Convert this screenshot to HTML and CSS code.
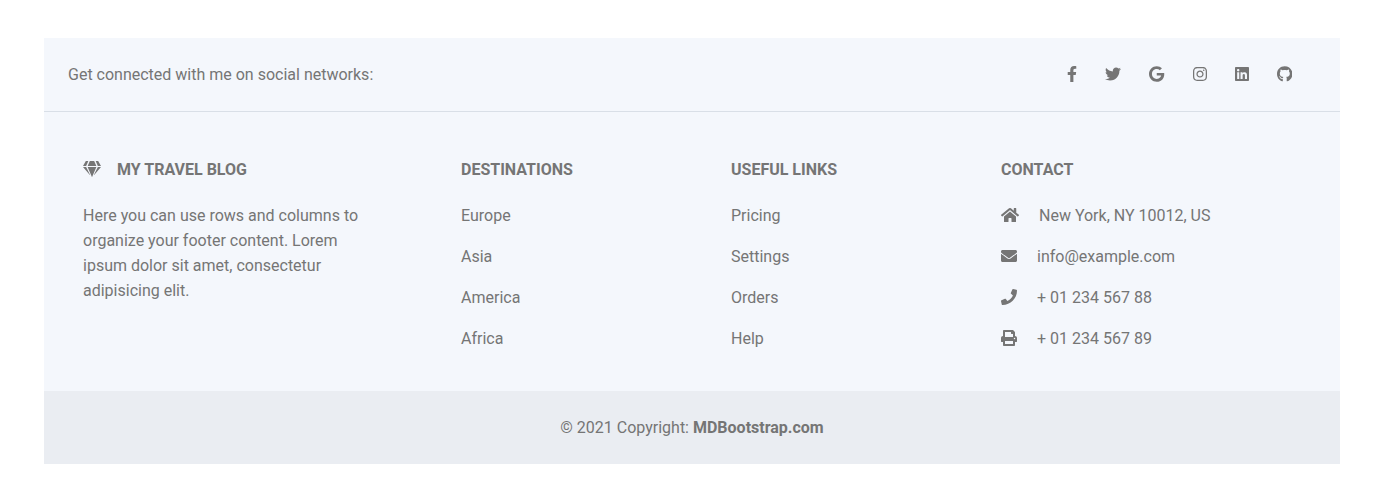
FILE: index.html
```html
<!DOCTYPE html>
<html lang="en">
<head>
<meta charset="utf-8">
<title>My travel blog</title>
<link rel="stylesheet" href="styles.css">
</head>
<body>
<footer class="footer">
  <section class="social">
    <span>Get connected with me on social networks:</span>
    <div class="social-links">
      <a href="#" aria-label="Facebook"><svg class="icon w-facebook" viewBox="0 0 320 512"><path d="M279.14 288l14.22-92.66h-88.91v-60.13c0-25.35 12.42-50.06 52.24-50.06h40.42V6.26S260.43 0 225.36 0c-73.22 0-121.08 44.38-121.08 124.72v70.62H22.89V288h81.39v224h100.17V288z"/></svg></a>
      <a href="#" aria-label="Twitter"><svg class="icon w-square" viewBox="0 0 512 512"><path d="M459.37 151.716c.325 4.548.325 9.097.325 13.645 0 138.72-105.583 298.558-298.558 298.558-59.452 0-114.68-17.219-161.137-47.106 8.447.974 16.568 1.299 25.34 1.299 49.055 0 94.213-16.568 130.274-44.832-46.132-.975-84.792-31.188-98.112-72.772 6.498.974 12.995 1.624 19.818 1.624 9.421 0 18.843-1.3 27.614-3.573-48.081-9.747-84.143-51.98-84.143-102.985v-1.299c13.969 7.797 30.214 12.67 47.431 13.319-28.264-18.843-46.781-51.005-46.781-87.391 0-19.492 5.197-37.36 14.294-52.954 51.655 63.675 129.3 105.258 216.365 109.807-1.624-7.797-2.599-15.918-2.599-24.04 0-57.828 46.782-104.934 104.934-104.934 30.213 0 57.502 12.67 76.67 33.137 23.715-4.548 46.456-13.32 66.599-25.34-7.798 24.366-24.366 44.833-46.132 57.827 21.117-2.273 41.584-8.122 60.426-16.243-14.292 20.791-32.161 39.308-52.628 54.253z"/></svg></a>
      <a href="#" aria-label="Google"><svg class="icon w-google" viewBox="0 0 488 512"><path d="M488 261.8C488 403.3 391.1 504 248 504 110.8 504 0 393.2 0 256S110.8 8 248 8c66.8 0 123 24.5 166.3 64.9l-67.5 64.9C258.5 52.6 94.3 116.6 94.3 256c0 86.5 69.1 156.6 153.7 156.6 98.2 0 135-70.4 140.8-106.9H248v-85.3h236.1c2.3 12.7 3.9 24.9 3.9 41.4z"/></svg></a>
      <a href="#" aria-label="Instagram"><svg class="icon w-narrow" viewBox="0 0 448 512"><path d="M224.1 141c-63.6 0-114.9 51.3-114.9 114.9s51.3 114.9 114.9 114.9S339 319.5 339 255.9 287.7 141 224.1 141zm0 189.6c-41.1 0-74.7-33.5-74.7-74.7s33.5-74.7 74.7-74.7 74.7 33.5 74.7 74.7-33.6 74.7-74.7 74.7zm146.4-194.3c0 14.9-12 26.8-26.8 26.8-14.9 0-26.8-12-26.8-26.8s12-26.8 26.8-26.8 26.8 12 26.8 26.8zm76.1 27.2c-1.7-35.9-9.9-67.7-36.2-93.9-26.2-26.2-58-34.4-93.9-36.2-37-2.1-147.9-2.1-184.9 0-35.8 1.7-67.6 9.9-93.9 36.1s-34.4 58-36.2 93.9c-2.1 37-2.1 147.9 0 184.9 1.7 35.9 9.9 67.7 36.2 93.9s58 34.4 93.9 36.2c37 2.1 147.9 2.1 184.9 0 35.9-1.7 67.7-9.9 93.9-36.2 26.2-26.2 34.4-58 36.2-93.9 2.1-37 2.1-147.8 0-184.8zM398.8 388c-7.8 19.6-22.9 34.7-42.6 42.6-29.5 11.7-99.5 9-132.1 9s-102.7 2.6-132.1-9c-19.6-7.8-34.7-22.9-42.6-42.6-11.7-29.5-9-99.5-9-132.1s-2.6-102.7 9-132.1c7.8-19.6 22.9-34.7 42.6-42.6 29.5-11.7 99.5-9 132.1-9s102.7-2.6 132.1 9c19.6 7.8 34.7 22.9 42.6 42.6 11.7 29.5 9 99.5 9 132.1s2.7 102.7-9 132.1z"/></svg></a>
      <a href="#" aria-label="LinkedIn"><svg class="icon w-narrow" viewBox="0 0 448 512"><path d="M416 32H31.9C14.3 32 0 46.5 0 64.3v383.4C0 465.5 14.3 480 31.9 480H416c17.6 0 32-14.5 32-32.3V64.3c0-17.8-14.4-32.3-32-32.3zM135.4 416H69V202.2h66.5V416zm-33.2-243c-21.3 0-38.5-17.3-38.5-38.5S80.9 96 102.2 96c21.2 0 38.5 17.3 38.5 38.5 0 21.3-17.2 38.5-38.5 38.5zm282.1 243h-66.4V312c0-24.8-.5-56.7-34.5-56.7-34.6 0-39.9 27-39.9 54.9V416h-66.4V202.2h63.7v29.2h.9c8.9-16.8 30.6-34.5 62.9-34.5 67.2 0 79.7 44.3 79.7 101.9V416z"/></svg></a>
      <a href="#" aria-label="GitHub"><svg class="icon w-github" viewBox="0 0 496 512"><path d="M165.900 397.400c0 2-2.300 3.600-5.200 3.600-3.300.3-5.600-1.300-5.600-3.600 0-2 2.300-3.600 5.200-3.600 3-.3 5.600 1.300 5.600 3.600zM244.800 8C106.100 8 0 113.300 0 252c0 110.900 69.800 205.800 169.500 239.200 12.800 2.300 17.300-5.600 17.300-12.100 0-6.200-.3-40.400-.3-61.400 0 0-70 15-84.700-29.800 0 0-11.400-29.100-27.800-36.600 0 0-22.900-15.700 1.600-15.400 0 0 24.900 2 38.600 25.800 21.900 38.600 58.600 27.500 72.900 20.900 2.300-16 8.800-27.100 16-33.700-55.900-6.200-112.300-14.300-112.300-110.500 0-27.500 7.600-41.300 23.600-58.900-2.600-6.500-11.100-33.300 2.600-67.900 20.900-6.500 69 27 69 27 20-5.600 41.500-8.500 62.800-8.500s42.800 2.900 62.800 8.500c0 0 48.100-33.600 69-27 13.700 34.700 5.200 61.400 2.600 67.900 16 17.700 25.800 31.500 25.800 58.900 0 96.500-58.900 104.200-114.800 110.500 9.200 7.900 17 22.900 17 46.400 0 33.700-.3 75.400-.3 83.600 0 6.500 4.600 14.400 17.300 12.100C428.200 457.800 496 362.900 496 252 496 113.300 383.500 8 244.800 8z"/></svg></a>
    </div>
  </section>
  <section class="columns">
    <div class="about">
      <h6><svg class="icon w-wide gem" viewBox="0 0 576 512"><path d="M485.500 0L576 160H474.900L405.700 0h79.800zm-128 0l69.200 160H149.300L218.500 0h139zm-267 0h79.800l-69.200 160H0L90.500 0zM0 192h100.700l123 251.700c1.500 3.100-2.700 5.900-5 3.300L0 192zm148.200 0h279.600l-137 318.200c-1 2.400-4.500 2.400-5.500 0L148.200 192zm204.100 251.700l123-251.700H576L357.300 446.900c-2.300 2.700-6.500-.1-5-3.200z"/></svg>MY TRAVEL BLOG</h6>
      <p>Here you can use rows and columns to organize your footer content. Lorem ipsum dolor sit amet, consectetur adipisicing elit.</p>
    </div>
    <div class="list">
      <h6>DESTINATIONS</h6>
      <p>Europe</p><p>Asia</p><p>America</p><p>Africa</p>
    </div>
    <div class="list">
      <h6>USEFUL LINKS</h6>
      <p><a href="#">Pricing</a></p><p><a href="#">Settings</a></p><p><a href="#">Orders</a></p><p><a href="#">Help</a></p>
    </div>
    <div class="contact">
      <h6>CONTACT</h6>
      <p><svg class="icon w-wide" viewBox="0 0 576 512"><path d="M280.370 148.260L96 300.110V464a16 16 0 0 0 16 16l112.060-.29a16 16 0 0 0 15.920-16V368a16 16 0 0 1 16-16h64a16 16 0 0 1 16 16v95.640a16 16 0 0 0 16 16.050L464 480a16 16 0 0 0 16-16V300L295.670 148.260a12.190 12.190 0 0 0-15.300 0zM571.600 251.470L488 182.560V44.050a12 12 0 0 0-12-12h-56a12 12 0 0 0-12 12v72.610L318.470 43a48 48 0 0 0-61 0L4.340 251.470a12 12 0 0 0-1.600 16.900l25.500 31A12 12 0 0 0 45.150 301l235.220-193.740a12.190 12.190 0 0 1 15.300 0L530.900 301a12 12 0 0 0 16.900-1.600l25.500-31a12 12 0 0 0-1.700-16.930z"/></svg><span>New York, NY 10012, US</span></p>
      <p><svg class="icon w-square" viewBox="0 0 512 512"><path d="M502.300 190.800c3.900-3.100 9.700-.2 9.700 4.700V400c0 26.500-21.500 48-48 48H48c-26.500 0-48-21.500-48-48V195.600c0-5 5.700-7.800 9.700-4.700 22.400 17.400 52.100 39.500 154.100 113.600 21.100 15.400 56.700 47.800 92.200 47.600 35.700.3 72-32.800 92.300-47.600 102-74.100 131.600-96.300 154-113.700zM256 320c23.200.4 56.600-29.200 73.400-41.400 132.700-96.300 142.800-104.700 173.400-128.700 5.800-4.500 9.200-11.500 9.200-18.900v-19c0-26.500-21.500-48-48-48H48c-26.500 0-48 21.500-48 48v19c0 7.400 3.400 14.300 9.200 18.900 30.600 23.900 40.700 32.400 173.400 128.700 16.800 12.200 50.200 41.800 73.400 41.400z"/></svg><span>info@example.com</span></p>
      <p><svg class="icon w-square" viewBox="0 0 512 512"><path d="M493.400 24.600l-104-24c-11.300-2.600-22.900 3.300-27.500 13.900l-48 112c-4.200 9.800-1.400 21.300 6.900 28l60.600 49.600c-36 76.700-98.900 140.500-177.200 177.200l-49.600-60.600c-6.800-8.300-18.200-11.100-28-6.900l-112 48C3.900 366.500-2 378.100.6 389.400l24 104C27.100 504.200 36.700 512 48 512c256.100 0 464-207.500 464-464 0-11.200-7.700-20.900-18.600-23.400z"/></svg><span>+ 01 234 567 88</span></p>
      <p><svg class="icon w-square" viewBox="0 0 512 512"><path d="M448 192V77.250c0-8.490-3.370-16.620-9.370-22.630L393.370 9.370c-6-6-14.140-9.370-22.630-9.370H96C78.330 0 64 14.330 64 32v160c-35.350 0-64 28.650-64 64v112c0 8.840 7.160 16 16 16h48v96c0 17.670 14.330 32 32 32h320c17.670 0 32-14.330 32-32v-96h48c8.840 0 16-7.160 16-16V256c0-35.350-28.650-64-64-64zm-64 256H128v-96h256v96zm0-224H128V64h192v48c0 8.840 7.160 16 16 16h48v96zm48 72c-13.250 0-24-10.750-24-24 0-13.260 10.750-24 24-24s24 10.740 24 24c0 13.250-10.750 24-24 24z"/></svg><span>+ 01 234 567 89</span></p>
    </div>
  </section>
  <div class="copyright">© 2021 Copyright: <a href="#">MDBootstrap.com</a></div>
</footer>
</body>
</html>
```
FILE: styles.css
```css
* { box-sizing: border-box; }
body {
  margin: 0;
  padding: 38px 43px 0 44px;
  background: #fff;
  color: #757575;
  font: 400 16px/25px Roboto, sans-serif;
}
a { color: inherit; text-decoration: none; }
h6, p { margin: 0; }
.icon { display: block; height: 16px; flex: none; fill: currentColor; }
.w-facebook { width: 10px; }
.w-narrow { width: 14px; }
.w-google { width: 15.25px; }
.w-github { width: 15.5px; }
.w-square { width: 16px; }
.w-wide { width: 18px; }
.footer { background: #f4f7fc; }
.social {
  display: flex;
  justify-content: space-between;
  align-items: flex-start;
  height: 74px;
  padding: 24px 48px 0 24px;
  border-bottom: 1px solid #d9dfe7;
}
.social-links { display: flex; gap: 28px; padding-top: 4px; }
.columns {
  display: grid;
  grid-template-columns: 378px 270px 270px 1fr;
  height: 279px;
  padding: 48px 24px 0 39px;
}
h6 {
  display: flex;
  align-items: flex-start;
  margin-bottom: 24px;
  font-size: 16px;
  line-height: 19.2px;
  font-weight: 700;
}
.gem { margin: 1px 16px 0 0; }
.about p { width: 284px; }
.list p, .contact p { margin-bottom: 16px; }
.contact p { display: flex; align-items: flex-start; gap: 20px; }
.contact .icon:not(.gem) { margin-top: 3.8px; }
.copyright { height: 73px; padding-top: 24px; text-align: center; background: #eaedf2; }
.copyright a { font-weight: 700; }
```
